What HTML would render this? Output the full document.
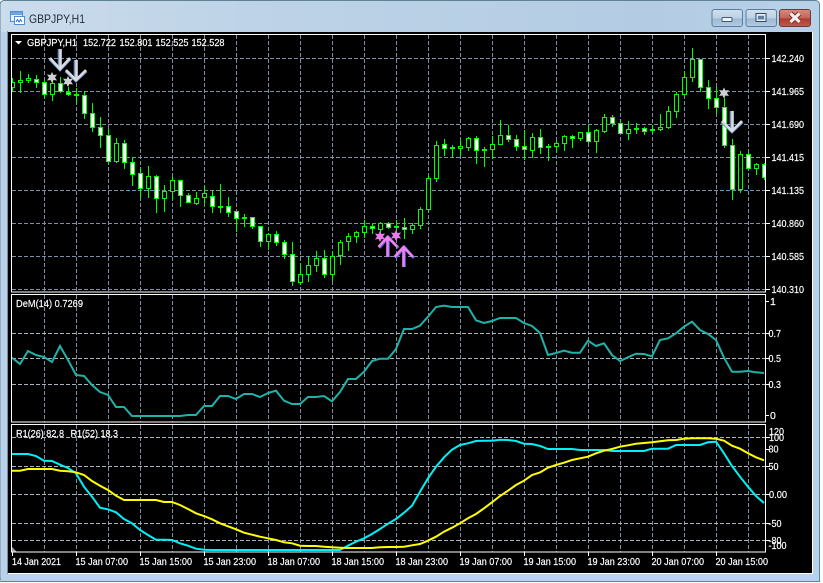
<!DOCTYPE html>
<html><head><meta charset="utf-8"><title>GBPJPY,H1</title>
<style>
html,body{margin:0;padding:0;background:#fff;width:823px;height:583px;overflow:hidden}
svg{display:block}
text{font-family:"Liberation Sans",sans-serif;font-size:10.5px;fill:#fff;stroke:#fff;stroke-width:.18px}
</style></head><body>
<svg width="823" height="583" viewBox="0 0 823 583" xmlns="http://www.w3.org/2000/svg">
<defs>
<linearGradient id="tb" x1="0" y1="0" x2="1" y2="0"><stop offset="0" stop-color="#cbdcec"/><stop offset=".3" stop-color="#bed3e7"/><stop offset=".8" stop-color="#b3cce3"/><stop offset="1" stop-color="#b9d1e8"/></linearGradient>
<linearGradient id="bb" x1="0" y1="0" x2="0" y2="1"><stop offset="0" stop-color="#d0dfee"/><stop offset=".5" stop-color="#bdd1e4"/><stop offset=".55" stop-color="#9db9d4"/><stop offset="1" stop-color="#b3cce3"/></linearGradient>
<linearGradient id="bc" x1="0" y1="0" x2="0" y2="1"><stop offset="0" stop-color="#d98b80"/><stop offset=".5" stop-color="#c4645a"/><stop offset=".55" stop-color="#ab3c30"/><stop offset="1" stop-color="#c25a4c"/></linearGradient>
<clipPath id="cm"><rect x="12" y="35" width="754" height="257"/></clipPath>
<clipPath id="c2"><rect x="12" y="295" width="754" height="127"/></clipPath>
<clipPath id="c3"><rect x="12" y="425" width="754" height="127"/></clipPath>
</defs>

<rect x="0" y="0.5" width="819.5" height="581" rx="4" fill="url(#tb)" stroke="#5f8296"/>
<rect x="1" y="32" width="818" height="549" fill="#b9d1ea"/>
<rect x="0" y="581" width="820" height="1" fill="#2f9bb0"/>
<rect x="819" y="8" width="1" height="574" fill="#4a8ca0"/>
<rect x="7" y="31" width="1" height="543" fill="#7f8a96"/>
<rect x="8" y="32" width="804" height="541" fill="#000"/>
<rect x="8" y="573" width="804" height="1" fill="#fff"/>
<rect x="812" y="32" width="1" height="542" fill="#fff"/>

<!-- title -->
<g>
<rect x="10.5" y="11.5" width="12" height="10" fill="#e8f2fb" stroke="#4d8fd0"/>
<rect x="11" y="12" width="11" height="3" fill="#6da6e0"/>
<rect x="14.5" y="16.5" width="10" height="8" fill="#fff" stroke="#4d8fd0"/>
<path d="M16 22l1.500-2.500 1.500 2.500 1.500-2.500 1.500 2.500" fill="none" stroke="#2a6fc0"/>
</g>
<text x="29" y="23" textLength="56" lengthAdjust="spacingAndGlyphs" style="font-size:12px;fill:#1f2a36;stroke:none">GBPJPY,H1</text>

<rect x="712" y="9.5" width="30.5" height="17" rx="2.5" fill="url(#bb)" stroke="#5b7d9c"/>
<rect x="746" y="9.5" width="30.5" height="17" rx="2.5" fill="url(#bb)" stroke="#5b7d9c"/>
<rect x="779.5" y="9.5" width="31" height="17" rx="2.5" fill="url(#bc)" stroke="#6e3a38"/>
<rect x="722" y="17.5" width="10" height="4" rx="1" fill="#f2f5f8" stroke="#3f5a74"/>
<rect x="756" y="13.5" width="10" height="8" fill="none" stroke="#2f4860"/>
<rect x="757" y="14.5" width="8" height="6" fill="none" stroke="#eef3f8"/>
<rect x="758" y="16" width="6" height="3" fill="#5f7f9f"/>
<path d="M790.5 13.5l9 8.500M799.5 13.5l-9 8.500" stroke="#7a2c26" stroke-width="5" fill="none"/>
<path d="M790.5 13.5l9 8.500M799.5 13.5l-9 8.500" stroke="#f6eeee" stroke-width="3.2" fill="none"/>

<!-- grid -->
<g fill="none" stroke="#7f8fa6" stroke-dasharray="4 2" shape-rendering="crispEdges">
<path clip-path="url(#cm)" d="M12 58.5H765M12 91.5H765M12 124.5H765M12 157.5H765M12 190.5H765M12 223.5H765M12 256.5H765M12 289.5H765"/>
<path d="M44.5 35V292M76.5 35V292M108.5 35V292M140.5 35V292M172.5 35V292M204.5 35V292M236.5 35V292M268.5 35V292M300.5 35V292M332.5 35V292M364.5 35V292M396.5 35V292M428.5 35V292M460.5 35V292M492.5 35V292M524.5 35V292M556.5 35V292M588.5 35V292M620.5 35V292M652.5 35V292M684.5 35V292M716.5 35V292M748.5 35V292"/>
<path d="M44.5 295V422M76.5 295V422M108.5 295V422M140.5 295V422M172.5 295V422M204.5 295V422M236.5 295V422M268.5 295V422M300.5 295V422M332.5 295V422M364.5 295V422M396.5 295V422M428.5 295V422M460.5 295V422M492.5 295V422M524.5 295V422M556.5 295V422M588.5 295V422M620.5 295V422M652.5 295V422M684.5 295V422M716.5 295V422M748.5 295V422"/>
<path d="M44.5 425V552M76.5 425V552M108.5 425V552M140.5 425V552M172.5 425V552M204.5 425V552M236.5 425V552M268.5 425V552M300.5 425V552M332.5 425V552M364.5 425V552M396.5 425V552M428.5 425V552M460.5 425V552M492.5 425V552M524.5 425V552M556.5 425V552M588.5 425V552M620.5 425V552M652.5 425V552M684.5 425V552M716.5 425V552M748.5 425V552"/>
<path stroke="#a9b2bd" d="M12 333.5H765M12 358.5H765M12 384.5H765M12 437.5H765M12 466.5H765M12 494.5H765M12 523.5H765M12 540.5H765"/>
</g>

<!-- candles -->
<g clip-path="url(#cm)" shape-rendering="crispEdges">
<path fill="none" stroke="#00ff00" d="M12.5 78V92M20.5 71V93M28.5 74V83M36.5 75V88M44.5 80V99M52.5 80V101M60.5 77V93M68.5 87V96M76.5 88V103M84.5 91V119M92.5 103V132M100.5 117V148M108.5 129V163M116.5 138V163M124.5 140V169M132.5 157V186M140.5 167V198M148.5 166V198M156.5 175V213M164.5 185V212M172.5 177V199M180.5 180V207M188.5 193V203M196.5 192V205M204.5 186V203M212.5 190V213M220.5 184V213M228.5 197V217M236.5 211V232M244.5 214V227M252.5 217V229M260.5 226V247M268.5 234V250M276.5 231V246M284.5 240V259M292.5 242V286M300.5 263V285M308.5 256V282M316.5 251V272M324.5 250V278M332.5 251V281M340.5 240V265M348.5 233V251M356.5 231V243M364.5 220V238M372.5 224V234M380.5 222V233M388.5 222V229M396.5 220V233M404.5 218V239M412.5 223V234M420.5 207V229M428.5 176V212M436.5 141V182M444.5 139V156M452.5 145V158M460.5 140V156M468.5 137V151M476.5 136V164M484.5 147V167M492.5 136V159M500.5 120V145M508.5 125V142M516.5 135V151M524.5 130V160M532.5 133V158M540.5 129V154M548.5 144V161M556.5 141V153M564.5 135V151M572.5 135V148M580.5 132V141M588.5 125V143M596.5 129V153M604.5 114V133M612.5 115V127M620.5 119V134M628.5 121V140M636.5 123V134M644.5 127V135M652.5 125V134M660.5 114V131M668.5 106V129M676.5 92V118M684.5 71V95M692.5 48V82M700.5 59V92M708.5 80V109M716.5 87V114M724.5 98V148M732.5 139V200M740.5 151V193M748.5 153V169M756.5 163V175M764.5 163V180"/>
<path fill="#fff" stroke="#00ff00" d="M34.5 79.5h4v3h-4zM42.5 82.5h4v12h-4zM58.5 83.5h4v8h-4zM66.5 92.5h4v2h-4zM82.5 95.5h4v18h-4zM90.5 113.5h4v14h-4zM98.5 127.5h4v8h-4zM106.5 135.5h4v26h-4zM122.5 143.5h4v19h-4zM130.5 162.5h4v12h-4zM138.5 173.5h4v15h-4zM154.5 176.5h4v22h-4zM178.5 180.5h4v15h-4zM186.5 195.5h4v7h-4zM210.5 196.5h4v10h-4zM226.5 206.5h4v6h-4zM234.5 211.5h4v7h-4zM250.5 217.5h4v9h-4zM258.5 226.5h4v15h-4zM274.5 234.5h4v8h-4zM282.5 242.5h4v12h-4zM290.5 254.5h4v27h-4zM322.5 258.5h4v16h-4zM370.5 226.5h4v2h-4zM386.5 223.5h4v4h-4zM402.5 227.5h4v2h-4zM442.5 144.5h4v4h-4zM474.5 138.5h4v12h-4zM506.5 135.5h4v4h-4zM514.5 139.5h4v7h-4zM522.5 146.5h4v3h-4zM538.5 137.5h4v10h-4zM570.5 136.5h4v2h-4zM586.5 132.5h4v9h-4zM610.5 117.5h4v6h-4zM618.5 123.5h4v10h-4zM642.5 128.5h4v3h-4zM698.5 59.5h4v28h-4zM706.5 87.5h4v11h-4zM714.5 98.5h4v9h-4zM722.5 107.5h4v38h-4zM730.5 145.5h4v44h-4zM746.5 154.5h4v14h-4zM762.5 164.5h4v13h-4z"/>
<path fill="#000" stroke="#00ff00" d="M10.5 82.5h4v5h-4zM18.5 80.5h4v2h-4zM26.5 78.5h4v2h-4zM50.5 83.5h4v11h-4zM74.5 94.5h4v1h-4zM114.5 143.5h4v18h-4zM146.5 176.5h4v12h-4zM162.5 191.5h4v7h-4zM170.5 180.5h4v11h-4zM194.5 198.5h4v5h-4zM202.5 193.5h4v4h-4zM218.5 206.5h4v1h-4zM242.5 217.5h4v1h-4zM266.5 234.5h4v7h-4zM298.5 274.5h4v8h-4zM306.5 265.5h4v9h-4zM314.5 258.5h4v7h-4zM330.5 256.5h4v18h-4zM338.5 242.5h4v13h-4zM346.5 236.5h4v5h-4zM354.5 232.5h4v4h-4zM362.5 226.5h4v6h-4zM378.5 223.5h4v6h-4zM394.5 226.5h4v1h-4zM410.5 225.5h4v4h-4zM418.5 209.5h4v16h-4zM426.5 178.5h4v31h-4zM434.5 145.5h4v33h-4zM450.5 147.5h4v1h-4zM458.5 146.5h4v2h-4zM466.5 138.5h4v9h-4zM482.5 149.5h4v1h-4zM490.5 144.5h4v5h-4zM498.5 135.5h4v9h-4zM530.5 137.5h4v13h-4zM546.5 146.5h4v1h-4zM554.5 143.5h4v3h-4zM562.5 136.5h4v7h-4zM578.5 132.5h4v6h-4zM594.5 130.5h4v11h-4zM602.5 117.5h4v14h-4zM626.5 129.5h4v4h-4zM634.5 128.5h4v1h-4zM650.5 129.5h4v1h-4zM658.5 127.5h4v2h-4zM666.5 111.5h4v16h-4zM674.5 94.5h4v17h-4zM682.5 77.5h4v17h-4zM690.5 59.5h4v18h-4zM738.5 154.5h4v35h-4zM754.5 164.5h4v4h-4z"/>
</g>

<!-- arrows & stars -->
<g fill="none" stroke-width="2.6">
<path d="M59 49V69M49.5 59L60 70L70.5 59M75 60V80M65.5 71L76 81L86.5 71M731 111V131M721.5 122L732 132L742.5 122" stroke="#6f8fc0"/>
<path d="M60.5 49V69M50 58L60 69L70 58M76.5 60V80M66 70L76 80L86 70M732.5 111V131M722 121L732 131L742 121" stroke="#d9dde2"/>
<path d="M388.5 257V237M379.5 248L388.5 237L398.5 248M404.5 267V247M395.5 258L404.5 247L414 258" stroke="#5a5ae0"/>
<path d="M387.5 257V237M378.5 247L387.5 237L397.5 247M403.5 267V247M394.5 257L403.5 247L413 257" stroke="#ee82ee"/>
</g>
<g fill="#cfcfd6">
<path d="M52 72l1.500 3 3.500-.5-2 3 2 3-3.500-.5-1.500 3-1.500-3-3.500.5 2-3-2-3 3.500.5z"/>
<path d="M68 76l1.500 3 3.500-.5-2 3 2 3-3.500-.5-1.500 3-1.500-3-3.500.5 2-3-2-3 3.500.5z"/>
<path d="M724 87.5l1.500 3 3.500-.5-2 3 2 3-3.500-.5-1.500 3-1.500-3-3.500.5 2-3-2-3 3.500.5z"/>
</g>
<g fill="#e87be8">
<path d="M380 231l1.500 3 3.500-.5-2 3 2 3-3.500-.5-1.500 3-1.500-3-3.500.5 2-3-2-3 3.500.5z"/>
<path d="M396 230l1.500 3 3.500-.5-2 3 2 3-3.500-.5-1.500 3-1.500-3-3.500.5 2-3-2-3 3.500.5z"/>
</g>

<!-- DeM -->
<polyline clip-path="url(#c2)" fill="none" stroke="#20b2aa" stroke-width="2" points="12,357.7 20,364 28,351 36,355 44,357 52,362 60,346 68,360 76,375 84,376 92,385 100,392 108,395 116,407 124,407 132,416 140,416 148,416 156,416 164,416 172,416 180,416 188,415 196,415 204,406 212,406 220,396 228,396 236,399 244,394 252,394 260,397 268,393 276,390.7 284,400.7 292,404 300,404 308,397 316,397 324,396 332,401.3 340,392 348,379 356,379 364,371.7 372,361 380,358.7 388,358.7 396,349 404,329 412,329 420,325.7 428,316.7 436,307 444,305.7 452,307 460,307 468,307 476,320.3 484,323 492,321 500,318 508,318 516,318 524,323 532,326 540,333 548,355 556,353 564,350.7 572,352.7 580,352.7 588,340.7 596,346 604,343.3 612,355 620,361 628,357.3 636,353.7 644,354 652,356.3 660,340 668,338.3 676,333.3 684,326.7 692,321.7 700,330 708,334 716,340 724,357.7 732,371.7 740,371.7 748,371 756,372.3 764,373"/>

<!-- R lines -->
<g clip-path="url(#c3)" fill="none" stroke-width="2">
<polyline stroke="#00f0f5" points="12,454 20,454 28,454 36,456 44,460.7 52,461 60,464.7 68,468 76,473.3 84,486.7 92,496.7 100,507.7 108,509.3 116,512.3 124,519 132,523.3 140,530 148,535 156,539.7 164,539.7 172,540 180,543.3 188,545.7 196,548.7 204,549.7 212,550 340,550 348,545.7 356,541.7 364,538.3 372,534 380,529 388,523.7 396,519 404,512.7 412,505.7 420,491.7 428,478.3 436,466.7 444,457.3 452,449.7 460,445 468,443.3 476,441 484,440.7 492,440.7 500,439.7 508,440 516,441 524,443.7 532,444 540,446 548,449 572,449 580,450 604,450 612,451 644,451 652,448.7 668,448.7 676,445 700,445 708,442.3 716,441.7 724,453.3 732,466 740,476.7 748,486.7 756,496 764,503"/>
<polyline stroke="#ffff00" points="12,470.7 20,470.7 28,469 52,469 60,470.7 68,471.3 76,472.3 84,475 92,481 100,485.7 108,490 116,495.7 124,500 156,500 164,502 172,502 180,505 188,509 196,513.3 204,516 212,519.3 220,523.3 228,526.3 236,529.3 244,532.7 252,534.7 260,536.7 268,538.3 276,540 284,542.3 292,543.3 300,545.7 308,546 316,546 324,546.7 332,547.3 340,547.7 348,548 372,548 380,547.3 388,547 396,547 404,546.7 412,545.3 420,544 428,540.7 436,536.7 444,531.7 452,527.7 460,523.3 468,518.3 476,514 484,508.3 492,502.3 500,496 508,490.7 516,485 524,480.7 532,475 540,472.5 548,467.7 556,465 564,462.7 572,460 580,458.3 588,456.7 596,453.3 604,450.7 612,449 620,446.7 628,445.3 636,443.7 644,443 652,442.3 660,441.3 668,440.3 676,440 684,438.7 692,438.3 708,438.3 716,438.7 724,440.7 732,445.7 740,448.7 748,453.3 756,457.3 764,460.3"/>
</g>
<path d="M12 547l5 5h-5z" fill="#9aa3ad"/>

<!-- pane borders -->
<g fill="none" stroke="#fff" shape-rendering="crispEdges">
<rect x="11.5" y="34.5" width="754" height="257.5"/>
<rect x="11.5" y="294.5" width="754" height="127.5"/>
<rect x="11.5" y="424.5" width="754" height="127.5"/>
<path d="M766 58.5h4M766 91.5h4M766 124.5h4M766 157.5h4M766 190.5h4M766 223.5h4M766 256.5h4M766 289.5h4M766 301.5h3M766 333.5h4M766 358.5h4M766 384.5h4M766 415.5h3M766 437.5h4M766 449.5h4M766 466.5h4M766 494.5h4M766 523.5h4M766 540.5h4M12.5 552v4M76.5 552v4M140.5 552v4M204.5 552v4M268.5 552v4M332.5 552v4M396.5 552v4M460.5 552v4M524.5 552v4M588.5 552v4M652.5 552v4M716.5 552v4"/>
</g>

<!-- text -->
<path d="M15 41h7l-3.500 3.500z" fill="#fff"/>
<text x="27" y="46" textLength="50" lengthAdjust="spacingAndGlyphs">GBPJPY,H1</text>
<text x="83" y="46" textLength="33" lengthAdjust="spacingAndGlyphs">152.722</text>
<text x="119.5" y="46" textLength="33" lengthAdjust="spacingAndGlyphs">152.801</text>
<text x="155.5" y="46" textLength="33" lengthAdjust="spacingAndGlyphs">152.525</text>
<text x="191.5" y="46" textLength="33" lengthAdjust="spacingAndGlyphs">152.528</text>
<text x="16" y="307" textLength="67" lengthAdjust="spacingAndGlyphs">DeM(14) 0.7269</text>
<text x="16" y="437" textLength="48" lengthAdjust="spacingAndGlyphs">R1(26) 82.8</text>
<text x="70.5" y="437" textLength="47.5" lengthAdjust="spacingAndGlyphs">R1(52) 18.3</text>

<text x="771.5" y="62" textLength="32.5" lengthAdjust="spacingAndGlyphs">142.240</text>
<text x="771.5" y="95" textLength="32.5" lengthAdjust="spacingAndGlyphs">141.965</text>
<text x="771.5" y="128" textLength="32.5" lengthAdjust="spacingAndGlyphs">141.690</text>
<text x="771.5" y="161" textLength="32.5" lengthAdjust="spacingAndGlyphs">141.415</text>
<text x="771.5" y="194" textLength="32.5" lengthAdjust="spacingAndGlyphs">141.135</text>
<text x="771.5" y="227" textLength="32.5" lengthAdjust="spacingAndGlyphs">140.860</text>
<text x="771.5" y="260" textLength="32.5" lengthAdjust="spacingAndGlyphs">140.585</text>
<text x="771.5" y="293" textLength="32.5" lengthAdjust="spacingAndGlyphs">140.310</text>

<text x="770" y="305">1</text>
<text x="768.5" y="337" textLength="12.5" lengthAdjust="spacingAndGlyphs">0.7</text>
<text x="768.5" y="362" textLength="12.5" lengthAdjust="spacingAndGlyphs">0.5</text>
<text x="768.5" y="388" textLength="12.5" lengthAdjust="spacingAndGlyphs">0.3</text>
<text x="770" y="419">0</text>

<text x="769" y="435" textLength="15" lengthAdjust="spacingAndGlyphs">120</text>
<text x="769" y="441" textLength="15" lengthAdjust="spacingAndGlyphs">100</text>
<text x="768.5" y="452.5" textLength="10" lengthAdjust="spacingAndGlyphs">80</text>
<text x="768.5" y="470" textLength="10" lengthAdjust="spacingAndGlyphs">50</text>
<text x="769" y="498" textLength="18" lengthAdjust="spacingAndGlyphs">0.00</text>
<text x="768.5" y="527" textLength="13" lengthAdjust="spacingAndGlyphs">-50</text>
<text x="768.5" y="544" textLength="13" lengthAdjust="spacingAndGlyphs">-80</text>
<text x="768.5" y="549" textLength="18" lengthAdjust="spacingAndGlyphs">-100</text>

<text x="12" y="565" textLength="49" lengthAdjust="spacingAndGlyphs">14 Jan 2021</text>
<text x="75.5" y="565" textLength="52.5" lengthAdjust="spacingAndGlyphs">15 Jan 07:00</text>
<text x="139.5" y="565" textLength="52.5" lengthAdjust="spacingAndGlyphs">15 Jan 15:00</text>
<text x="203.5" y="565" textLength="52.5" lengthAdjust="spacingAndGlyphs">15 Jan 23:00</text>
<text x="267.5" y="565" textLength="52.5" lengthAdjust="spacingAndGlyphs">18 Jan 07:00</text>
<text x="331.5" y="565" textLength="52.5" lengthAdjust="spacingAndGlyphs">18 Jan 15:00</text>
<text x="395.5" y="565" textLength="52.5" lengthAdjust="spacingAndGlyphs">18 Jan 23:00</text>
<text x="459.5" y="565" textLength="52.5" lengthAdjust="spacingAndGlyphs">19 Jan 07:00</text>
<text x="523.5" y="565" textLength="52.5" lengthAdjust="spacingAndGlyphs">19 Jan 15:00</text>
<text x="587.5" y="565" textLength="52.5" lengthAdjust="spacingAndGlyphs">19 Jan 23:00</text>
<text x="651.5" y="565" textLength="52.5" lengthAdjust="spacingAndGlyphs">20 Jan 07:00</text>
<text x="715.5" y="565" textLength="52.5" lengthAdjust="spacingAndGlyphs">20 Jan 15:00</text>
</svg>
</body></html>
